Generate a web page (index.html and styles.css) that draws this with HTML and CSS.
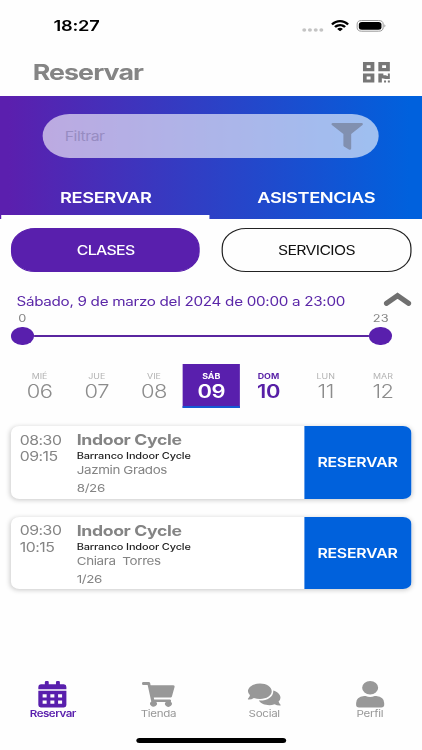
FILE: index.html
```html
<!DOCTYPE html>
<html lang="es">
<head>
<meta charset="utf-8">
<title>Reservar</title>
<link rel="stylesheet" href="styles.css">
</head>
<body>
<div class="screen">
  <div class="status">
    <span class="clock">18:27</span>
    <svg class="status-icons" viewBox="0 0 88 14" preserveAspectRatio="none">
      <g fill="#c4c4c4"><ellipse cx="4.7" cy="11" rx="2" ry="1.7"/><ellipse cx="10.4" cy="11" rx="2" ry="1.7"/><ellipse cx="16.2" cy="11" rx="2" ry="1.7"/><ellipse cx="21.8" cy="11" rx="2" ry="1.7"/></g>
      <path fill="#000" d="M31.6 4.7C36.500 -.1 44.500 -.1 49.400 4.700L47.700 6.200C43.500 2.300 37.500 2.300 33.300 6.200ZM34.600 7.300C38 4.300 43 4.300 46.400 7.300L44.700 8.800C42 6.700 39 6.700 36.300 8.800ZM37.600 9.900C39.400 8.500 41.600 8.500 43.400 9.900L40.500 12.300Z"/>
      <rect x="57.600" y="1.500" width="26" height="10.700" rx="4.500" ry="3.700" fill="none" stroke="#8d8d8d" stroke-width=".9"/>
      <rect x="59.300" y="3" width="22.600" height="7.700" rx="3" ry="2.500"/>
      <path d="M84.800 5.300Q87 6.800 84.800 8.400Z" fill="#999"/>
    </svg>
  </div>
  <header class="title-bar">
    <h1>Reservar</h1>
    <svg class="qr" viewBox="0 0 28 21" preserveAspectRatio="none">
      <path fill="#777" fill-rule="evenodd" d="M0 0H11.500V9.200H0ZM3.800 3.200V6H7.700V3.200ZM15.500 0H27V9.200H15.500ZM19.300 3.200V6H23.200V3.200ZM0 11.500H11.500V20.500H0ZM3.800 14.600V17.400H7.700V14.600ZM15.500 11.500H20.500V13.300H22.800L24.600 14H25V11.500H27V17H22.500L19 16.200V20.500H15.500ZM21.200 18.600H23.200V20.500H21.200ZM25 18.600H27V20.500H25Z"/>
    </svg>
  </header>
  <section class="hero">
    <div class="search">
      <span>Filtrar</span>
      <svg class="funnel" viewBox="0 0 32 27" preserveAspectRatio="none"><path fill="#8190b0" d="M1.500 0H30.500Q32.800 .6 31.300 2L20 11V25.500Q19.600 27.400 17.700 26.400L12.800 23.500Q12.200 23 12.200 22.300V11L.7 2Q-.8 .5 1.500 0Z"/></svg>
    </div>
    <nav class="tabs">
      <span class="tab active"><b>RESERVAR</b></span>
      <span class="tab"><b>ASISTENCIAS</b></span>
    </nav>
  </section>
  <div class="switch">
    <button class="pill filled">CLASES</button>
    <button class="pill">SERVICIOS</button>
  </div>
  <div class="range-head">
    <span>Sábado, 9 de marzo del 2024 de 00:00 a 23:00</span>
    <svg class="chevron" viewBox="0 0 28 15" preserveAspectRatio="none"><path d="M2.900 11.300L14 3.600L25.100 11.300" fill="none" stroke="#707070" stroke-width="5.200" stroke-linecap="round"/></svg>
  </div>
  <div class="range-values"><span>0</span><span>23</span></div>
  <div class="slider"><i class="thumb"></i><i class="line"></i><i class="thumb"></i></div>
  <div class="days">
    <div class="day"><small>MIÉ</small><span>06</span></div>
    <div class="day"><small>JUE</small><span>07</span></div>
    <div class="day"><small>VIE</small><span>08</span></div>
    <div class="day selected"><small>SÁB</small><span>09</span></div>
    <div class="day open"><small>DOM</small><span>10</span></div>
    <div class="day"><small>LUN</small><span>11</span></div>
    <div class="day"><small>MAR</small><span>12</span></div>
  </div>
  <main class="classes">
    <article class="card">
      <div class="times"><span>08:30</span><span>09:15</span></div>
      <div class="info"><h2>Indoor Cycle</h2><p class="room">Barranco Indoor Cycle</p><p class="coach">Jazmin Grados</p><p class="seats">8/26</p></div>
      <button class="book">RESERVAR</button>
    </article>
    <article class="card">
      <div class="times"><span>09:30</span><span>10:15</span></div>
      <div class="info"><h2>Indoor Cycle</h2><p class="room">Barranco Indoor Cycle</p><p class="coach">Chiara&nbsp; Torres</p><p class="seats">1/26</p></div>
      <button class="book">RESERVAR</button>
    </article>
  </main>
  <footer class="nav">
    <div class="item current">
      <svg viewBox="0 0 34 27" preserveAspectRatio="none"><path fill="currentColor" fill-rule="evenodd" d="M9.500 3.300V1Q9.500 0 10.700 0H12.200Q13.400 0 13.400 1V3.300H20.600V1Q20.600 0 21.800 0H23.300Q24.500 0 24.500 1V3.300H28.500Q31 3.500 31 6V8.300H3V6Q3 3.500 5.500 3.300ZM3 9.800H31V24Q31 26.300 28.500 26.500H5.500Q3 26.300 3 24ZM7.300 13.200V16.500H11.300V13.200ZM15 13.200V16.500H19V13.200ZM22.700 13.200V16.500H26.700V13.200ZM7.300 19.500V22.800H11.300V19.500ZM15 19.500V22.800H19V19.500ZM22.700 19.500V22.800H26.700V19.500Z"/></svg>
      <span>Reservar</span>
    </div>
    <div class="item">
      <svg viewBox="0 0 34 27" preserveAspectRatio="none"><path fill="currentColor" d="M2 1H7.500Q8.600 1 8.900 2L9.300 4.200H32Q33.600 4.400 33.300 5.700L30.600 15.600Q30.300 16.500 29.200 16.500H12.500L12.900 18.500H28.600Q30 18.700 29.800 20L29.500 20.800A3.400 2.900 0 1 1 24.500 21H15A3.400 2.900 0 1 1 10 20.500L6.400 4H2Q.8 3.900 .8 3V2Q.9 1.100 2 1Z"/></svg>
      <span>Tienda</span>
    </div>
    <div class="item">
      <svg viewBox="0 0 34 27" preserveAspectRatio="none"><path fill="currentColor" d="M12.800 2.500C19.500 2.500 24.500 6 24.500 10.300S19.500 18 12.800 18Q9.500 18 6.700 16.900Q4 18.700 .9 18.400Q.4 18 .9 17.500Q2.300 16 2.800 14.200Q.8 12.500 .8 10.300C.8 6 6 2.500 12.800 2.500ZM26 9.500C30.500 11 33.200 13.500 33.200 16.800Q33.200 19 31.300 20.600Q31.900 22.400 33.300 23.800Q33.600 24.500 33 24.600Q30 24.800 27.300 23.300C21.500 25.500 14 23.500 11.600 19.500C19.500 20 26.500 16 26 9.500Z"/></svg>
      <span>Social</span>
    </div>
    <div class="item">
      <svg viewBox="0 0 34 27" preserveAspectRatio="none"><path fill="currentColor" d="M17 0A8 6.700 0 1 1 17 13.400A8 6.700 0 1 1 17 0ZM11 15H12.500Q17 16.800 21.500 15H23Q31 15.800 31 22V24Q31 26.300 28 26.500H6Q3 26.300 3 24V22Q3 15.800 11 15Z"/></svg>
      <span>Perfil</span>
    </div>
  </footer>
  <div class="home"></div>
</div>
</body>
</html>
```
FILE: styles.css
```css
* { box-sizing: border-box; margin: 0; padding: 0; }
html, body { width: 422px; height: 750px; overflow: hidden; background: #fefefe; }
body { font-family: Inter, "Liberation Sans", sans-serif; color: #848484; }
button { border: 0; background: none; font: inherit; }
svg { display: block; }

.screen {
  display: flex; flex-direction: column;
  width: 346.6px; height: 750px;
  transform: scaleX(1.2176); transform-origin: 0 0;
  white-space: nowrap;
}

.status { display: flex; justify-content: space-between; height: 48px; padding: 19px 28px 0 44px; }
.clock { font-size: 15px; line-height: 14px; font-weight: 600; color: #000; letter-spacing: -.2px; }
.status-icons { width: 72.300px; height: 14px; }

.title-bar { display: flex; justify-content: space-between; height: 48px; padding: 14px 25.500px 0 26.800px; }
h1 { font-size: 22px; line-height: 20px; font-weight: 700; letter-spacing: -.75px; color: #858585; }
.qr { width: 23px; height: 21px; }

.hero { display: flex; flex-direction: column; height: 123px; background: linear-gradient(90deg, #5b1fae 2%, #0061dd 97%); }
.search {
  display: flex; justify-content: space-between; align-items: center;
  height: 44px; margin: 18px 35.300px 0; padding: 0 13px 0 17.900px;
  border-radius: 22px; background: rgba(255, 255, 255, .61);
  font-size: 13px; letter-spacing: -.4px; color: #978cc2;
}
.funnel { width: 26.300px; height: 27px; }
.tabs { display: flex; flex: 1; padding-left: 1.200px; }
.tab { width: 171.300px; padding-top: 30px; text-align: center; color: #fff; font-size: 15px; line-height: 20px; letter-spacing: -.32px; }
.tab + .tab { padding-left: 3.200px; }
.tab b { font-weight: 600; }
.tab.active { height: 60.500px; border-bottom: 4.500px solid #fff; }

.switch { display: flex; gap: 17.700px; padding: 9px 9px 0; }
.pill { width: 155.700px; height: 44px; border: 1px solid #222; border-radius: 20px; font-size: 13px; letter-spacing: -.53px; color: #111; }
.pill.filled { background: #591fad; border-color: #591fad; color: #fff; font-weight: 500; }

.range-head { display: flex; justify-content: space-between; height: 39px; padding: 20px 8.500px 0 13.500px; color: #5b27a8; font-size: 12.500px; line-height: 19px; letter-spacing: -.245px; }
.chevron { width: 23px; height: 15px; }
.range-values { display: flex; justify-content: space-between; height: 15.500px; padding: 2px 27.500px 0 15px; font-size: 10.500px; line-height: 12px; }
.slider { display: flex; align-items: center; height: 18.500px; padding: 0 25px 0 9px; }
.thumb { width: 18.500px; height: 18.500px; border-radius: 50%; background: #591fad; }
.line { flex: 1; height: 2px; background: #5a25a0; }

.days { display: grid; grid-template-columns: repeat(7, 47px); height: 44px; margin: 19px 0 0 9px; }
.day { display: flex; flex-direction: column; align-items: center; padding-top: 8px; color: #8c8c8c; }
.day small { font-size: 7.300px; line-height: 9px; color: #b2b2b2; }
.day span { font-size: 18px; line-height: 21px; font-weight: 300; letter-spacing: -.4px; }
.day.selected { background: #591fad; border-bottom: 2.500px solid #1559d3; color: #fff; }
.day.selected small, .day.open small { color: inherit; font-weight: 700; }
.day.selected span, .day.open span { font-weight: 600; }
.day.open { color: #571fa6; }

.classes { display: flex; flex-direction: column; gap: 18px; padding: 18px 9px 0; }
.card { display: flex; height: 72.500px; border-radius: 7px; background: #fff; box-shadow: 0 1px 5px rgba(0, 0, 0, .22); overflow: hidden; }
.times { display: flex; flex-direction: column; width: 54px; padding: 5.500px 0 0 7.200px; font-size: 13px; line-height: 16.500px; letter-spacing: -.4px; }
.info { flex: 1; padding-top: 5px; }
h2 { font-size: 14.500px; line-height: 17px; font-weight: 700; letter-spacing: -.3px; }
.room { font-size: 9px; line-height: 15px; color: #222; font-weight: 500; letter-spacing: -.12px; }
.coach { font-size: 11px; line-height: 14px; letter-spacing: -.3px; }
.seats { font-size: 11px; line-height: 22px; letter-spacing: -.3px; }
.book { width: 88px; background: #0061dc; color: #fff; font-size: 13px; font-weight: 600; letter-spacing: -.2px; }

.nav { display: grid; grid-template-columns: repeat(4, 86.800px); margin: 92px 0 0; }
.item { display: flex; flex-direction: column; align-items: center; color: #989898; font-size: 9.500px; line-height: 11px; letter-spacing: -.25px; }
.item svg { width: 28px; height: 27px; }
.item.current { color: #591fad; font-weight: 600; letter-spacing: -.4px; }
.home { width: 123.300px; height: 4.300px; margin: auto auto 7.500px; border-radius: 3px; background: #000; }
```
